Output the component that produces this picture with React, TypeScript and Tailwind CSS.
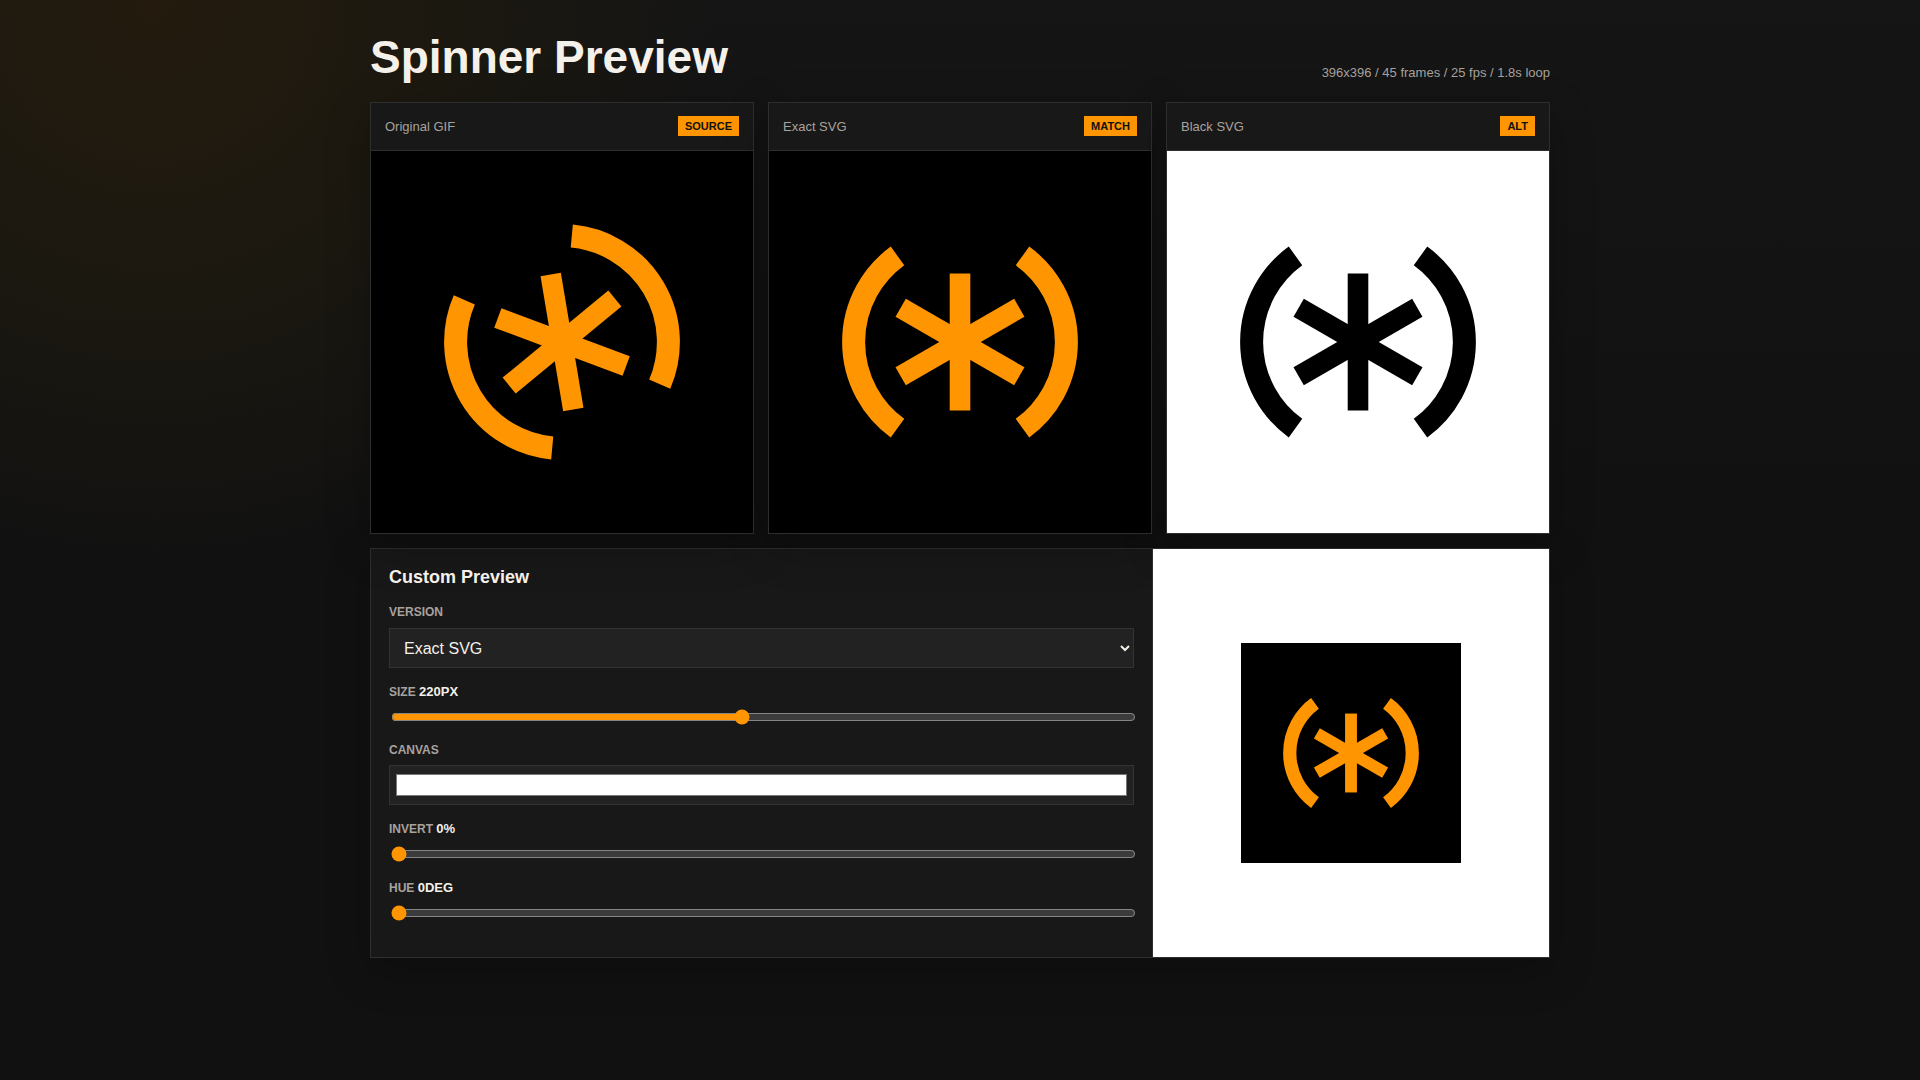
import React from "react"

const ORANGE = "#ff9500"

// the mark: asterisk plus two arcs, drawn on the 382px stage
function SpinnerMark({ color, size = 382, arcTurn = 0, starTurn = 0 }: { color: string; size?: number; arcTurn?: number; starTurn?: number }) {
  return (
    <svg viewBox="0 0 382 382" width={size} height={size} fill="none" stroke={color} className="block">
      <g strokeWidth="23" transform={`rotate(${arcTurn} 191 191)`}>
        <path d="M128.5 104.9A106.4 106.4 0 0 0 128.5 277.1" />
        <path d="M253.5 104.9A106.4 106.4 0 0 1 253.5 277.1" />
      </g>
      <g strokeWidth="20.6" transform={`rotate(${starTurn} 191 191)`}>
        <path d="M191 122.5V259.5" />
        <path d="M191 122.5V259.5" transform="rotate(60 191 191)" />
        <path d="M191 122.5V259.5" transform="rotate(120 191 191)" />
      </g>
    </svg>
  )
}

function SpinnerCard({ title, badge, children, light }: { title: string; badge: string; children: React.ReactNode; light?: boolean }) {
  return (
    <div className="border border-[#2e2e2e] bg-[#181818] shadow-[0_12px_40px_rgba(0,0,0,0.25)]">
      <div className="flex items-center justify-between border-b border-[#2e2e2e] px-[14px] pb-[14px] pt-[13px]">
        <span className="text-[13px] leading-none text-[#a8a29e]">{title}</span>
        <span className="h-5 bg-[#ff9500] px-[7px] text-[11px] font-bold leading-5 text-[#111111]">{badge}</span>
      </div>
      <div className={`flex aspect-square items-center justify-center ${light ? "bg-white" : "bg-black"}`}>{children}</div>
    </div>
  )
}

function Field({ label, value, children }: { label: string; value?: string; children: React.ReactNode }) {
  return (
    <div className="mb-4 flex flex-col">
      <div className="mb-2 text-xs font-bold uppercase leading-[15px] text-[#a8a29e]">
        {label} {value && <span className="text-[13px] text-[#f5f1ea]">{value}</span>}
      </div>
      {children}
    </div>
  )
}

function RangeInput({ min, max, value }: { min: number; max: number; value: number }) {
  return (
    <input
      type="range"
      min={min}
      max={max}
      defaultValue={value}
      className="mx-[2px] mb-[2px] mt-[1px] block w-full accent-[#ff9500]"
    />
  )
}

export default function App() {
  return (
    <div className="min-h-screen bg-[#111111] bg-[radial-gradient(circle_at_8%_0%,#241b0e_0px,#1b1810_300px,rgba(20,20,20,0)_560px),linear-gradient(#151515_0px,#111111_500px)] font-['Liberation_Sans',sans-serif] [color-scheme:dark]">
      <div className="mx-auto w-[1180px] pt-8">
        <header className="mb-5 flex items-end justify-between">
          <h1 className="text-[46px] font-bold leading-[50px] text-[#f5f1ea]">Spinner Preview</h1>
          <p className="text-[13px] text-[#a8a29e]">396x396 / 45 frames / 25 fps / 1.8s loop</p>
        </header>

        <div className="mb-[14px] grid grid-cols-3 gap-[14px]">
          <SpinnerCard title="Original GIF" badge="SOURCE">
            <SpinnerMark color={ORANGE} arcTurn={-30.7} starTurn={-9.5} />
          </SpinnerCard>
          <SpinnerCard title="Exact SVG" badge="MATCH">
            <SpinnerMark color={ORANGE} />
          </SpinnerCard>
          <SpinnerCard title="Black SVG" badge="ALT" light>
            <SpinnerMark color="#000000" />
          </SpinnerCard>
        </div>

        <div className="grid grid-cols-[782px_1fr] border border-[#2e2e2e] bg-[#181818] shadow-[0_12px_40px_rgba(0,0,0,0.25)]">
          <div className="border-r border-[#2e2e2e] px-[18px] pb-[18px] pt-[18px]">
            <h2 className="mb-[17px] text-lg font-bold leading-[21px] text-[#f5f1ea]">Custom Preview</h2>

            <Field label="Version">
              <select defaultValue="exact" className="h-10 w-full border border-[#333333] bg-[#222222] px-[10px] text-base text-[#f5f1ea]">
                <option value="exact">Exact SVG</option>
                <option value="black">Black SVG</option>
                <option value="gif">Original GIF</option>
              </select>
            </Field>

            <Field label="Size" value="220px">
              <RangeInput min={64} max={396} value={220} />
            </Field>

            <Field label="Canvas">
              <input type="color" defaultValue="#ffffff" className="-mt-px block h-10 w-full border border-[#333333] bg-[#222222] p-1" />
            </Field>

            <Field label="Invert" value="0%">
              <RangeInput min={0} max={100} value={0} />
            </Field>

            <Field label="Hue" value="0deg">
              <RangeInput min={0} max={360} value={0} />
            </Field>
          </div>

          <div className="flex items-center justify-center bg-white">
            <div className="bg-black">
              <SpinnerMark color={ORANGE} size={220} />
            </div>
          </div>
        </div>
      </div>
    </div>
  )
}
